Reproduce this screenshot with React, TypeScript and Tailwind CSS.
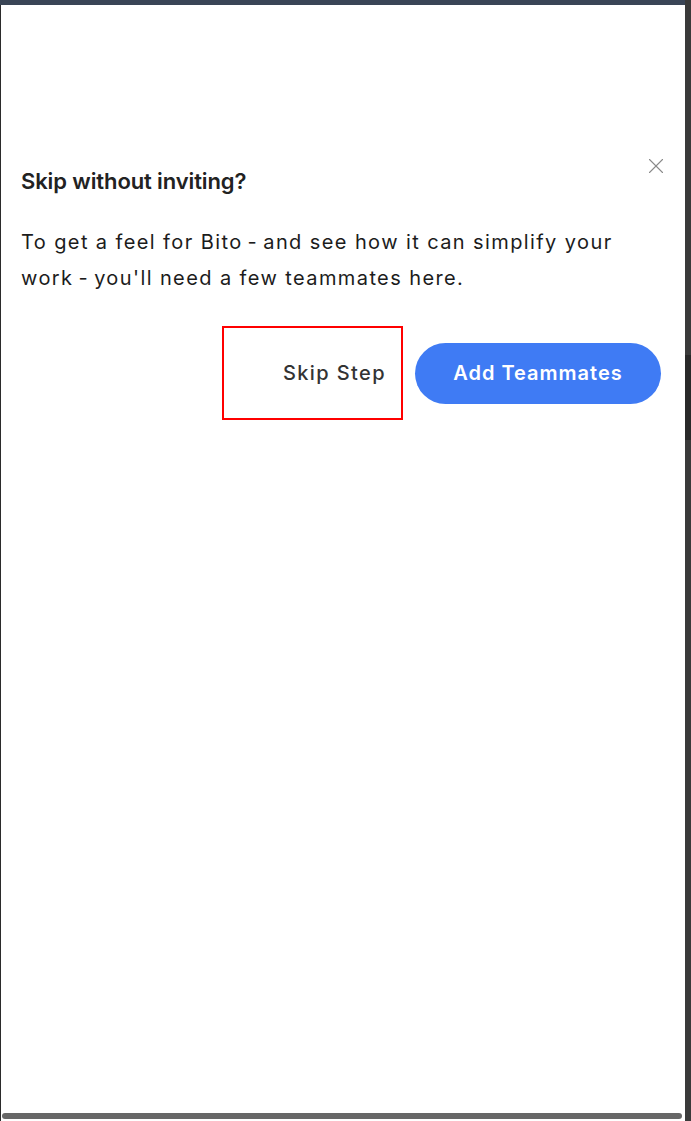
import { X } from "lucide-react"

export default function App() {
  return (
    <div className="flex h-[1121px] w-[691px] overflow-hidden bg-white font-['Inter',sans-serif]">
      <div className="flex flex-1 flex-col">
        <div className="h-[5px] bg-[#3a4556]" />
        <div className="flex flex-1 flex-col border-l border-[#2b2b2b]">
          <div className="relative flex-1 pl-[20px] pr-[24px] pt-[162px]">
            <button className="absolute right-[16px] top-[148px] text-[#8a8a8a]">
              <X className="h-[26px] w-[26px]" strokeWidth={1} />
            </button>
            <h2 className="text-[22px] font-semibold leading-[28px] tracking-[-0.005em] text-[#222]">
              Skip without inviting?
            </h2>
            <p className="mt-[29px] text-[20px] leading-[36px] tracking-[0.07em] text-[#1c1c1c]">
              To get a feel for Bito{"\u2009"}-{"\u2009"}and see how it can simplify your
              <br />
              work{"\u2009"}-{"\u2009"}you'll need a few teammates here.
            </p>
            <div className="mt-[30px] flex items-center justify-end gap-[12px]">
              <button className="flex h-[94px] w-[181px] items-center justify-end border-2 border-[#ff0000] pr-[15px] text-[20px] font-medium tracking-[0.07em] text-[#333]">
                Skip Step
              </button>
              <button className="h-[61px] w-[246px] rounded-full bg-[#3f7bf4] text-[20px] font-semibold tracking-[0.05em] text-white">
                Add Teammates
              </button>
            </div>
          </div>
          <div className="flex h-[8px] items-start pb-[1px]">
            <div className="ml-[1px] h-[6px] w-[680px] rounded-full bg-[#676767]" />
          </div>
        </div>
      </div>
      <div className="flex w-[6px] flex-col bg-[#3a3a3a]">
        <div className="mt-[355px] h-[85px] bg-[#292929]" />
      </div>
    </div>
  )
}
